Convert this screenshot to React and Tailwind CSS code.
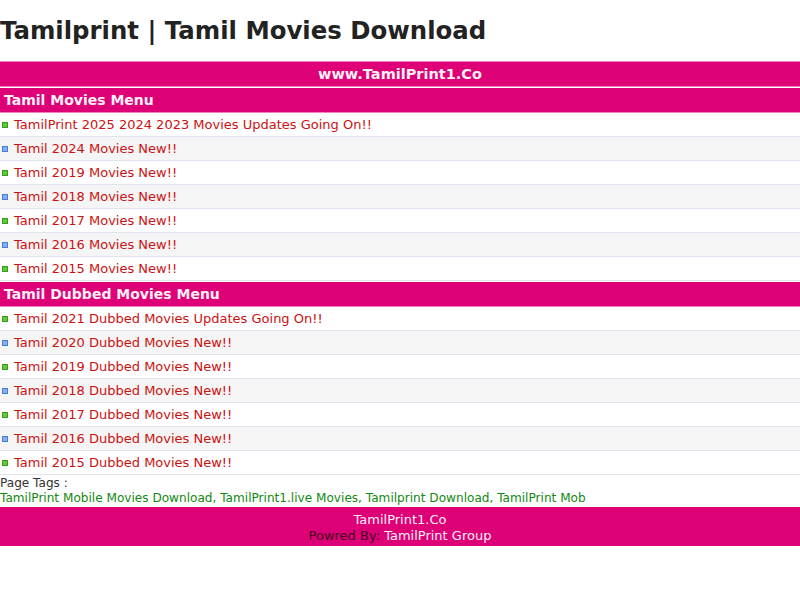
import React from 'react'

const movies = [
  'TamilPrint 2025 2024 2023 Movies Updates Going On!!',
  'Tamil 2024 Movies New!!',
  'Tamil 2019 Movies New!!',
  'Tamil 2018 Movies New!!',
  'Tamil 2017 Movies New!!',
  'Tamil 2016 Movies New!!',
  'Tamil 2015 Movies New!!',
]

const dubbed = [
  'Tamil 2021 Dubbed Movies Updates Going On!!',
  'Tamil 2020 Dubbed Movies New!!',
  'Tamil 2019 Dubbed Movies New!!',
  'Tamil 2018 Dubbed Movies New!!',
  'Tamil 2017 Dubbed Movies New!!',
  'Tamil 2016 Dubbed Movies New!!',
  'Tamil 2015 Dubbed Movies New!!',
]

function Bullet({ blue }) {
  return blue ? (
    <span className="mr-[6px] inline-block h-[6px] w-[6px] shrink-0 border border-[#4a7fd0] bg-[#7fb0f5]" />
  ) : (
    <span className="mr-[6px] inline-block h-[6px] w-[6px] shrink-0 border border-[#3a9a20] bg-[#5ccc30]" />
  )
}

function MenuList({ title, items }) {
  return (
    <div className="pb-[1px]">
      <div className="h-[25px] border-b border-[#f080c0] bg-[#dd0077] pl-[4px] text-[14px] font-bold leading-[24px] text-[#fff0f8]">
        {title}
      </div>
      {items.map((item, i) => (
        <div
          key={item}
          className={
            'flex h-[24px] items-center border-b border-[#e0e4f0] pl-[2px] text-[13px] text-[#cc1111] ' +
            (i % 2 === 1 ? 'bg-[#f5f5f5]' : 'bg-white')
          }
        >
          <Bullet blue={i % 2 === 1} />
          <span>{item}</span>
        </div>
      ))}
    </div>
  )
}

export default function App() {
  return (
    <div className="min-h-[600px] bg-white font-['DejaVu_Sans',Verdana,sans-serif]">
      <h1 className="pt-[15px] pb-[14px] text-[24.4px] font-bold leading-[32px] text-[#222]">
        Tamilprint | Tamil Movies Download
      </h1>
      <div className="h-[26px] border-y border-[#f080c0] bg-[#dd0077] text-center text-[14.5px] font-bold leading-[24px] text-[#fff0f8]">
        www.TamilPrint1.Co
      </div>
      <div className="h-[1px] bg-white" />
      <MenuList title="Tamil Movies Menu" items={movies} />
      <MenuList title="Tamil Dubbed Movies Menu" items={dubbed} />
      <div className="text-[12.1px] leading-[15px]">
        <div className="text-[#333]">Page Tags :</div>
        <div className="whitespace-nowrap overflow-hidden text-[#118811]">
          TamilPrint Mobile Movies Download, TamilPrint1.live Movies, Tamilprint Download, TamilPrint Mob
        </div>
      </div>
      <div className="mt-[1px] bg-[#dd0077] pt-[5px] pb-[2px] text-center text-[13px] leading-[16px] text-[#fff0f8]">
        <div>TamilPrint1.Co</div>
        <div>
          <span className="text-[#4a0020]">Powred By: </span>TamilPrint Group
        </div>
      </div>
    </div>
  )
}
